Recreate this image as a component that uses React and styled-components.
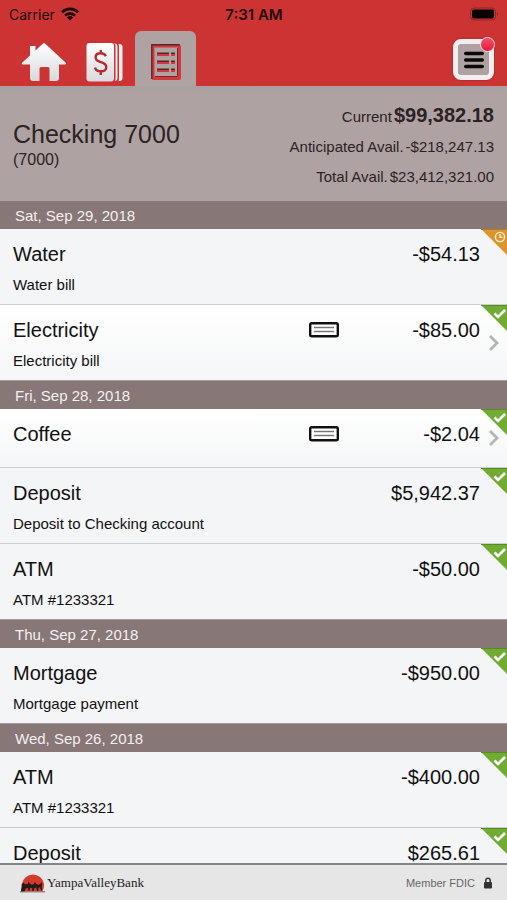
import styled, { createGlobalStyle } from 'styled-components'

const GlobalStyle = createGlobalStyle`
  * {
    box-sizing: border-box;
  }
  body {
    margin: 0;
    font-family: 'Liberation Sans', Arial, sans-serif;
    background: #f4f5f7;
    color: #111;
  }
  button {
    border: none;
    background: none;
    padding: 0;
    cursor: pointer;
  }
`

const Screen = styled.div`
  display: flex;
  flex-direction: column;
  height: 100vh;
  overflow: hidden;
`

const Header = styled.header`
  background: #cc3333;
`

const StatusBar = styled.div`
  display: grid;
  grid-template-columns: 1fr auto 1fr;
  align-items: center;
  height: 28px;
  padding: 0 8px 0 9px;
  font-family: Inter, sans-serif;
  font-size: 14px;
  color: #1c0808;
`

const Carrier = styled.span`
  display: flex;
  align-items: center;
  gap: 6px;
`

const Time = styled.span`
  font-size: 15px;
  font-weight: 600;
`

const BatteryIcon = styled.svg`
  justify-self: end;
`

const Nav = styled.nav`
  display: flex;
  align-items: flex-end;
  height: 58px;
  padding: 0 13px;
`

const Tab = styled.button`
  display: flex;
  align-items: center;
  justify-content: center;
  width: 61px;
  height: 55px;
  padding-top: 6px;
  border-radius: 6px 6px 0 0;
  background: ${p => p.$active ? '#afa2a2' : 'none'};
`

const MenuButton = styled.button`
  position: relative;
  display: flex;
  align-items: center;
  justify-content: center;
  width: 41px;
  height: 41px;
  margin: 0 0 6px auto;
  border: 5px solid #f3eeee;
  border-radius: 8px;
  background: #aea1a1;
  box-shadow: 0 0 2px #8c2525;
`

const Dot = styled.span`
  position: absolute;
  top: -7px;
  right: -6px;
  width: 15px;
  height: 15px;
  border: 1px solid #fbd5d8;
  border-radius: 50%;
  background: linear-gradient(#f4506a, #e01c3c);
`

const Summary = styled.section`
  display: flex;
  justify-content: space-between;
  align-items: center;
  height: 115px;
  padding: 4px 13px 0;
  background: linear-gradient(#aaa0a1, #afa2a2 10px);
  color: #2b2324;
`

const AccountName = styled.h1`
  margin: 0;
  font-size: 25px;
  font-weight: normal;
  line-height: 28px;
`

const AccountNumber = styled.p`
  margin: 0;
  font-size: 16px;
  line-height: 24px;
`

const Balances = styled.dl`
  margin: 0;
`

const Balance = styled.div`
  display: flex;
  justify-content: flex-end;
  align-items: baseline;
  gap: 2px;
  font-size: 15px;
  line-height: 30px;

  dd {
    margin: 0;
    font-size: ${p => p.$main ? '20px' : '15px'};
    font-weight: ${p => p.$main ? 'bold' : 'normal'};
  }
`

const List = styled.main`
  flex: 1;
  min-height: 0;
  overflow: hidden;
`

const DateBar = styled.h2`
  height: 28px;
  margin: 0;
  padding: 0 15px;
  font-size: 15px;
  font-weight: normal;
  line-height: 30px;
  background: #877777;
  color: #f5eff0;
`

const Rows = styled.ul`
  margin: 0;
  padding: 0;
  list-style: none;
`

const Row = styled.li`
  position: relative;
  display: grid;
  grid-template-columns: 1fr 30px 141px 27px;
  align-items: start;
  min-height: 59px;
  padding: 13px 0 9px 13px;
  border-bottom: 1px solid #ccced1;
  background: ${p => p.$linked ? 'linear-gradient(#fff, #f5f6f7)' : '#f4f5f7'};

  &:last-child {
    border-bottom-color: #a59b9c;
  }
`

const Title = styled.h3`
  margin: 0;
  font-size: 20px;
  font-weight: normal;
  line-height: 24px;
`

const Note = styled.p`
  margin: 9px 0 0;
  font-size: 15px;
  line-height: 20px;
`

const Amount = styled.span`
  grid-column: 3;
  font-size: 20px;
  line-height: 24px;
  text-align: right;
`

const CheckIcon = styled.svg`
  grid-column: 2;
  align-self: start;
  height: 24px;
`

const Open = styled.button`
  position: absolute;
  top: 0;
  right: 0;
  bottom: 0;
  display: flex;
  align-items: center;
  justify-content: center;
  width: 27px;
`

const Corner = styled.svg`
  position: absolute;
  top: 0;
  right: 0;
`

const Footer = styled.footer`
  display: flex;
  align-items: center;
  gap: 8px;
  height: 37px;
  padding: 0 14px 0 20px;
  border-top: 2px solid #858585;
  background: #e6e6e6;
  font-size: 11px;
  color: #666;
`

const Brand = styled.a`
  display: flex;
  align-items: center;
  gap: 2px;
  margin-right: auto;
  font-family: 'Liberation Serif', serif;
  font-size: 13px;
  color: #222;
  text-decoration: none;
`

const days = [
  {
    date: 'Sat, Sep 29, 2018',
    items: [
      { title: 'Water', note: 'Water bill', amount: '-$54.13', pending: true },
      { title: 'Electricity', note: 'Electricity bill', amount: '-$85.00', check: true },
    ],
  },
  {
    date: 'Fri, Sep 28, 2018',
    items: [
      { title: 'Coffee', amount: '-$2.04', check: true },
      { title: 'Deposit', note: 'Deposit to Checking account', amount: '$5,942.37' },
      { title: 'ATM', note: 'ATM #1233321', amount: '-$50.00' },
    ],
  },
  {
    date: 'Thu, Sep 27, 2018',
    items: [
      { title: 'Mortgage', note: 'Mortgage payment', amount: '-$950.00' },
    ],
  },
  {
    date: 'Wed, Sep 26, 2018',
    items: [
      { title: 'ATM', note: 'ATM #1233321', amount: '-$400.00' },
      { title: 'Deposit', amount: '$265.61' },
    ],
  },
]

const WifiIcon = () => (
  <svg width="18" height="14" viewBox="0 0 18 14" fill="none" stroke="#1c0808" strokeWidth="2.6">
    <path d="M1 5.2a11.4 11.4 0 0 1 16 0" />
    <path d="M4 8.6a7.2 7.2 0 0 1 10 0" />
    <path d="M9 13.6 5.9 10.4a4.4 4.4 0 0 1 6.2 0z" fill="#1c0808" stroke="none" />
  </svg>
)

const HomeIcon = () => (
  <svg width="46" height="40" viewBox="0 0 46 40">
    <defs>
      <linearGradient id="home" x2="0" y2="1">
        <stop offset="0" stopColor="#fff" />
        <stop offset="1" stopColor="#d9d9dc" />
      </linearGradient>
    </defs>
    <path
      d="M22 1.4q1-.9 2 0l20.8 19.4q.9 1.700-1 1.700H38V36q0 3-3 3h-6.500V26.500q0-1.500-1.500-1.500h-7q-1.500 0-1.500 1.500V39H12q-3 0-3-3V22.500H2q-2 0-1-1.700L9 13.500V4h5.500v4.500z"
      fill="url(#home)"
    />
  </svg>
)

const MoneyIcon = () => (
  <svg width="37" height="40" viewBox="0 0 37 40">
    <rect x="8" y="2" width="28.5" height="37" rx="3" fill="#eee" />
    <rect x="5" y="1" width="28" height="39" rx="3" fill="#cc3333" />
    <rect x="4" y="1.5" width="27.5" height="37.5" rx="3" fill="#eee" />
    <rect x="2" y="1" width="27.5" height="39" rx="3" fill="#cc3333" />
    <rect x=".5" y="1" width="27.5" height="38.5" rx="3" fill="url(#home)" />
    <path
      d="M19.8 14.300c-.8-2-2.700-3-5.200-3-3 0-5 1.600-5 4.100 0 6 10.700 3.300 10.700 9.500 0 2.800-2.300 4.400-5.500 4.400-3 0-5.100-1.300-5.800-3.700M14.800 8v4M14.800 29v4"
      fill="none"
      stroke="#b52b30"
      strokeWidth="2.4"
    />
  </svg>
)

const LedgerIcon = () => (
  <svg width="30" height="36" viewBox="0 0 30 36">
    <rect x="2" y="2" width="26.5" height="32.5" rx="1" fill="none" stroke="#d2383c" strokeWidth="3" />
    <path d="M.8 35V.8h28" fill="none" stroke="#5c2629" strokeWidth="1.4" />
    <path d="M4 32.500h22.500V4" fill="none" stroke="#742a2d" />
    <path d="M6 10.500h12M20 10.500h4M6 18.500h12M20 18.500h4M6 26.500h12M20 26.500h4" stroke="#d2383c" strokeWidth="3" />
    <path d="M6 9.300h12M20 9.300h4M6 17.300h12M20 17.300h4M6 25.300h12M20 25.300h4" stroke="#5c2629" strokeWidth="1.4" />
  </svg>
)

const StatusCorner = ({ pending }) => (
  <Corner width="26" height="26" viewBox="0 0 26 26" role="img" aria-label={pending ? 'Pending' : 'Cleared'}>
    <path d="M0 0h26v26z" fill={pending ? '#dc952c' : '#70ab32'} />
    <path d="M0 0h26" stroke={pending ? '#b67a20' : '#558a28'} strokeWidth="2" />
    {pending ? (
      <g fill="none" stroke="#fff3d8" strokeWidth="1.4">
        <circle cx="19" cy="8" r="4.6" />
        <path d="M19 5v3.300h2.500" />
      </g>
    ) : (
      <path d="m13.500 8.500 3.500 3.500 7-7" fill="none" stroke="#fff" strokeWidth="2.6" />
    )}
  </Corner>
)

const BrandMark = () => (
  <svg width="25" height="20" viewBox="0 0 25 20">
    <path d="M3.500 18a11 11 0 1 1 19 0z" fill="#d33a2c" />
    <path
      d="M1 18.500c0-3 1-5 .6-7.300l2-1.700 1.400 1.800 2.500-.3 1-2.400 1.500 1.800 1.500 1.400 2-.5 1.300-2.300 1.700 2 1.500.8 2-.6 1.400-2 1 1.500-.7 2 .4 4.800h-1l-1-3-1.500.2-.4 3.300h-1.200l-.6-3.200-2 .2-.8 3h-1.200l-.4-3-1.800-.2-.9 3.200H8.500L8 15l-2.200.2-1.300 3.300z"
      fill="#2a1716"
    />
    <path d="M0 18.800h25" stroke="#6b5552" />
  </svg>
)

function Transaction({ title, note, amount, check, pending }) {
  return <Row $linked={check}>
    <div>
      <Title>{title}</Title>
      {note && <Note>{note}</Note>}
    </div>
    {check && <CheckIcon width="30" height="24" viewBox="0 0 30 24">
      <rect x="1.2" y="5.2" width="27.6" height="13.1" rx="1.5" fill="#fff" stroke="#111" strokeWidth="2.4" />
      <path d="M5 9.500h20M5 13.500h20" stroke="#777" strokeWidth="1.6" />
    </CheckIcon>}
    <Amount>{amount}</Amount>
    <StatusCorner pending={pending} />
    {check && <Open aria-label={`Open ${title}`}>
      <svg width="12" height="18" viewBox="0 0 12 18" fill="none" stroke="#b5b5b5" strokeWidth="2.8">
        <path d="m2 2 7 7-7 7" />
      </svg>
    </Open>}
  </Row>
}

function App() {
  return <Screen>
    <GlobalStyle />
    <Header>
      <StatusBar>
        <Carrier>Carrier <WifiIcon /></Carrier>
        <Time>7:31 AM</Time>
        <BatteryIcon width="30" height="14" viewBox="0 0 30 14">
          <rect x="1.5" y="1" width="25" height="12" rx="3.5" fill="none" stroke="#8f2626" />
          <rect x="3" y="2.5" width="22" height="9" rx="2" fill="#080202" />
          <path d="M28 5q2 2 0 4z" fill="#8f2626" />
        </BatteryIcon>
      </StatusBar>
      <Nav>
        <Tab aria-label="Home"><HomeIcon /></Tab>
        <Tab aria-label="Payments"><MoneyIcon /></Tab>
        <Tab aria-label="Transactions" $active><LedgerIcon /></Tab>
        <MenuButton aria-label="Menu">
          <svg width="20" height="18" viewBox="0 0 20 18" stroke="#080808" strokeWidth="3.4" strokeLinecap="round">
            <path d="M1.700 2.500h16.600M1.700 9h16.600M1.700 15.500h16.600" />
          </svg>
          <Dot />
        </MenuButton>
      </Nav>
    </Header>

    <Summary>
      <div>
        <AccountName>Checking 7000</AccountName>
        <AccountNumber>(7000)</AccountNumber>
      </div>
      <Balances>
        <Balance $main><dt>Current</dt><dd>$99,382.18</dd></Balance>
        <Balance><dt>Anticipated Avail.</dt><dd>-$218,247.13</dd></Balance>
        <Balance><dt>Total Avail.</dt><dd>$23,412,321.00</dd></Balance>
      </Balances>
    </Summary>

    <List>
      {days.map(day => <section key={day.date}>
        <DateBar>{day.date}</DateBar>
        <Rows>
          {day.items.map(item => <Transaction key={item.title} {...item} />)}
        </Rows>
      </section>)}
    </List>

    <Footer>
      <Brand href="#"><BrandMark />YampaValleyBank</Brand>
      Member FDIC
      <svg width="10" height="12" viewBox="0 0 10 12">
        <rect x="1" y="5" width="8" height="6.5" rx="1" fill="#333" />
        <path d="M2.800 5.500V3.500a2.200 2.200 0 0 1 4.400 0v2" fill="none" stroke="#333" strokeWidth="1.5" />
      </svg>
    </Footer>
  </Screen>
}

export default App
